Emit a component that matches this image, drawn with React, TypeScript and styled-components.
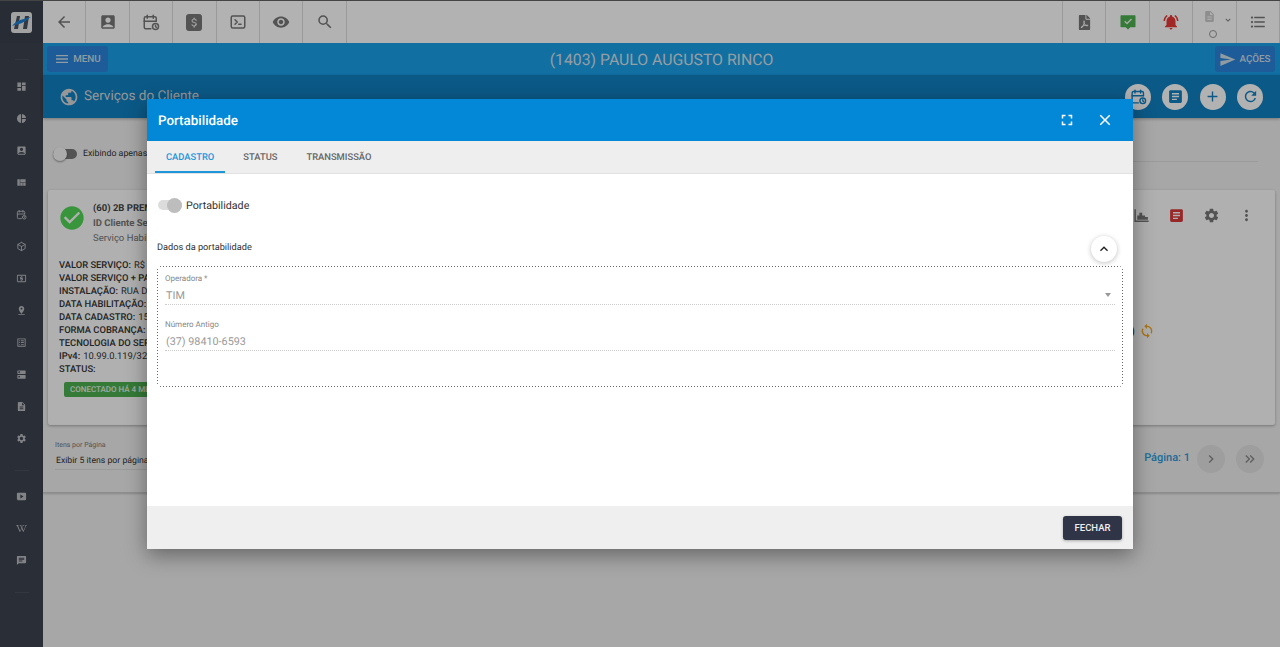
import styled, { createGlobalStyle } from "styled-components"
import {
  MdAccountBox, MdArrowBack, MdArticle, MdAttachMoney, MdChat, MdCheckCircle, MdChevronRight, MdClose,
  MdDashboard, MdDescription, MdDns, MdExpandLess, MdFullscreen, MdFormatListBulleted, MdKeyboardArrowDown,
  MdKeyboardDoubleArrowRight, MdListAlt, MdLocalAtm, MdMenu, MdMoreVert, MdNotificationsActive,
  MdAdd, MdPinDrop, MdPieChart, MdPublic, MdRefresh, MdSearch, MdSend, MdSettings, MdSmartDisplay,
  MdSync, MdViewQuilt, MdVisibility,
} from "react-icons/md"
import { FaFilePdf, FaWikipediaW } from "react-icons/fa"
import { TbBox, TbCalendarTime, TbTerminal2 } from "react-icons/tb"

const GlobalStyle = createGlobalStyle`
  html, body { margin: 0; padding: 0; height: 100%; overflow: hidden; }
  body { font-family: Roboto, "Liberation Sans", sans-serif; color: #333; text-rendering: geometricPrecision; }
  * { box-sizing: border-box; }
`

const Shell = styled.div`
  position: relative;
  display: flex;
  width: 1280px;
  height: 647px;
  overflow: hidden;
  background: #f0f0f0;
  border-top: 1px solid #444;
`

const Sidebar = styled.nav`
  width: 43px;
  flex-shrink: 0;
  display: flex;
  flex-direction: column;
  align-items: center;
  background: #3d424e;
  color: #b9bcc2;
`

const LogoCell = styled.div`
  width: 100%;
  height: 42px;
  display: flex;
  align-items: center;
  justify-content: center;
  background: #3a3f4b;
`

const LogoBox = styled.div`
  width: 21px;
  height: 21px;
  border-radius: 3px;
  background: #e8e8e8;
  overflow: hidden;
`

const SideRule = styled.div<{ $after: number }>`
  width: 14px;
  height: 1px;
  margin-top: 16px;
  margin-bottom: ${(p) => p.$after}px;
  background: #4b505c;
`

const SideItem = styled.div`
  width: 100%;
  height: 32px;
  display: flex;
  align-items: center;
  justify-content: center;
  font-size: 11px;
`

const Main = styled.main`
  flex: 1;
  min-width: 0;
  display: flex;
  flex-direction: column;
`

const Toolbar = styled.header`
  height: 42px;
  display: flex;
  background: #fff;
`

const ToolCell = styled.div<{ $color?: string; $w?: number }>`
  width: ${(p) => p.$w ?? 43.4}px;
  display: flex;
  align-items: center;
  justify-content: center;
  border-right: 1px solid #ddd;
  color: ${(p) => p.$color ?? "#777"};
  font-size: 18px;
`

const ToolSpacer = styled.div`
  flex: 1;
  border-right: 1px solid #ddd;
`

const DollarBadge = styled.span`
  width: 16px;
  height: 17px;
  display: flex;
  align-items: center;
  justify-content: center;
  border-radius: 3px;
  background: #777;
  color: #ddd;
  font-size: 13px;
`

const BrokenStack = styled.div`
  display: flex;
  flex-direction: column;
  align-items: center;
  gap: 7px;
  margin-top: 4px;
  color: #ccc;
  font-size: 13px;
`

const BrokenDot = styled.span`
  width: 8px;
  height: 8px;
  margin-left: 8px;
  border: 1px solid #999;
  border-radius: 50%;
`

const BrokenChevron = styled.span`
  display: flex;
  margin: -4px -6px 0 6px;
  font-size: 10px;
`

const TitleBar = styled.div`
  height: 32px;
  display: flex;
  align-items: center;
  justify-content: space-between;
  padding: 0 5px 0 4px;
  background: #1b9fe9;
`

const BarButton = styled.div<{ $w: number }>`
  width: ${(p) => p.$w}px;
  height: 26px;
  display: flex;
  align-items: center;
  justify-content: center;
  gap: 3px;
  border-radius: 3px;
  background: #2a84dc;
  color: #d0dee8;
  font-size: 9.8px;
  font-weight: 500;
`

const ClientName = styled.h1`
  margin: 0;
  color: #d6e2ea;
  font-size: 15.8px;
  font-weight: 400;
`

const SectionBar = styled.div`
  height: 43px;
  display: flex;
  align-items: center;
  padding: 0 17px 0 16px;
  background: #1080c2;
  box-shadow: 0 1px 3px rgba(0, 0, 0, 0.3);
  color: #d8d8d8;
`

const SectionTitle = styled.h2`
  flex: 1;
  margin: 0 0 2px 5px;
  font-size: 13.5px;
  font-weight: 400;
`

const RoundAction = styled.div`
  width: 26px;
  height: 26px;
  display: flex;
  align-items: center;
  justify-content: center;
  margin-left: 11.3px;
  border-radius: 50%;
  background: #fff;
  color: #1080c2;
  font-size: 17px;
`

const Content = styled.section`
  flex: 1;
  display: flex;
  flex-direction: column;
`

const FilterRow = styled.div`
  height: 72px;
  display: flex;
  align-items: center;
  gap: 6px;
  padding: 0 22px 0 10px;
`

const SmallSwitch = styled.div`
  position: relative;
  width: 24px;
  height: 10px;
  border-radius: 5px;
  background: #777;
`

const SmallThumb = styled.span`
  position: absolute;
  left: 0;
  top: -2px;
  width: 14px;
  height: 14px;
  border-radius: 50%;
  background: #f5f5f5;
  box-shadow: 0 1px 2px rgba(0, 0, 0, 0.4);
`

const FilterLabel = styled.span`
  font-size: 8.8px;
`

const FilterInput = styled.div`
  flex: 1;
  height: 1px;
  margin: 15px 0 0 90px;
  background: #ddd;
`

const Card = styled.article`
  height: 235px;
  margin: 0 5px;
  padding: 10px 0 0 10px;
  border-radius: 2px;
  background: #fcfcfc;
  box-shadow: 0 1px 3px rgba(0, 0, 0, 0.3);
`

const CardHead = styled.div`
  height: 52px;
  display: flex;
  align-items: flex-start;
`

const StatusIcon = styled.div`
  display: flex;
  margin-top: 4px;
  color: #52d656;
  font-size: 28px;
`

const CardTitles = styled.div`
  flex: 1;
  display: flex;
  flex-direction: column;
  margin: 1px 0 0 7px;
`

const CardLine = styled.div<{ $bold?: boolean; $muted?: boolean }>`
  height: 15px;
  line-height: 15px;
  font-size: 9.5px;
  font-weight: ${(p) => (p.$bold ? 700 : 400)};
  color: ${(p) => (p.$muted ? "#777" : "#444")};
`

const CardActions = styled.div`
  display: flex;
  align-items: center;
  height: 30px;
  padding-right: 11px;
`

const CardAction = styled.div<{ $color?: string }>`
  width: 35px;
  display: flex;
  justify-content: center;
  color: ${(p) => p.$color ?? "#777"};
  font-size: 17px;
`

const Details = styled.dl`
  margin: 7px 0 0 1px;
`

const DetailRow = styled.div`
  height: 13px;
  display: flex;
  align-items: center;
  font-size: 9.4px;
  color: #333;
`

const DetailKey = styled.dt`
  margin-right: 3px;
  font-weight: 500;
`

const DetailValue = styled.dd`
  margin: 0;
`

const SyncBlock = styled.span`
  display: flex;
  align-items: center;
  gap: 4px;
  margin: 0 120px 0 auto;
  font-size: 12px;
`

const SyncIcon = styled.span`
  display: flex;
  color: #f5a623;
  font-size: 16px;
`

const StatusBadge = styled.div`
  width: fit-content;
  height: 15px;
  display: flex;
  align-items: center;
  margin: 6px 0 0 6px;
  padding: 0 6px;
  border-radius: 2px;
  background: #4caf50;
  color: #e8f3e8;
  font-size: 8px;
  font-weight: 500;
`

const Pager = styled.div`
  height: 68px;
  display: flex;
  justify-content: space-between;
  padding: 0 16px 0 12px;
  border-bottom: 1px solid #ccc;
  box-shadow: 0 1px 2px rgba(0, 0, 0, 0.2);
`

const PageSize = styled.div`
  display: flex;
  flex-direction: column;
  align-self: flex-start;
  width: 160px;
  margin-top: 16px;
  padding-bottom: 3px;
  border-bottom: 1px solid #ddd;
`

const PageSizeLabel = styled.span`
  margin-bottom: 7px;
  color: #777;
  font-size: 7px;
`

const PageSizeValue = styled.span`
  margin-left: 1px;
  font-size: 8.7px;
`

const PageNav = styled.div`
  display: flex;
  align-items: center;
`

const PageLabel = styled.span`
  margin: 0 7px 3px 0;
  color: #2a9ad8;
  font-size: 11px;
  font-weight: 500;
`

const PageButton = styled.div`
  width: 28px;
  height: 28px;
  display: flex;
  align-items: center;
  justify-content: center;
  border-radius: 50%;
  background: #e2e2e2;
  color: #888;
  font-size: 16px;

  & + & {
    margin-left: 11px;
  }
`

const Backdrop = styled.div`
  position: absolute;
  inset: 0;
  background: rgba(0, 0, 0, 0.3);
`

const Modal = styled.div`
  position: absolute;
  left: 147px;
  top: 98px;
  width: 986px;
  height: 450px;
  display: flex;
  flex-direction: column;
  background: #fff;
  box-shadow: 0 6px 20px rgba(0, 0, 0, 0.4);
`

const ModalHead = styled.div`
  height: 42px;
  display: flex;
  align-items: center;
  padding: 0 19px 0 11px;
  background: #0288d6;
  color: #fff;
`

const ModalTitle = styled.h3`
  flex: 1;
  margin: 0;
  padding-top: 2px;
  font-size: 13.4px;
  font-weight: 500;
`

const HeadIcon = styled.span`
  display: flex;
  margin-left: 20px;
  font-size: 18px;
`

const Tabs = styled.div`
  height: 33px;
  display: flex;
  padding-left: 8px;
  background: #eee;
  border-bottom: 1px solid #e2e2e2;
`

const Tab = styled.div<{ $active?: boolean }>`
  height: 32px;
  display: flex;
  align-items: center;
  margin-right: 7px;
  padding: 3px 11px 0;
  color: ${(p) => (p.$active ? "#1e96dc" : "#666")};
  border-bottom: 2px solid ${(p) => (p.$active ? "#1e96dc" : "transparent")};
  font-size: 9.4px;
  font-weight: 500;
`

const ModalBody = styled.div`
  flex: 1;
  padding: 0 10px;
`

const ToggleRow = styled.div`
  height: 62px;
  display: flex;
  align-items: center;
  gap: 4px;
`

const BigSwitch = styled.div`
  position: relative;
  width: 24px;
  height: 10px;
  margin-left: 1px;
  border-radius: 5px;
  background: #dcdcdc;
`

const BigThumb = styled.span`
  position: absolute;
  right: 0;
  top: -2.5px;
  width: 15px;
  height: 15px;
  border-radius: 50%;
  background: #bdbdbd;
`

const ToggleLabel = styled.span`
  padding-top: 1px;
  font-size: 10.7px;
  color: #333;
`

const GroupHead = styled.div`
  height: 20px;
  display: flex;
  align-items: center;
  justify-content: space-between;
  padding-right: 6px;
  font-size: 9.2px;
  color: #333;
`

const GroupTitle = styled.span`
  padding-top: 2px;
`

const CollapseButton = styled.div`
  flex-shrink: 0;
  width: 26px;
  height: 26px;
  display: flex;
  align-items: center;
  justify-content: center;
  margin-top: 6px;
  border-radius: 50%;
  background: #fff;
  box-shadow: 0 1px 5px rgba(0, 0, 0, 0.25);
  color: #222;
  font-size: 16px;
`

const FieldGroup = styled.fieldset`
  height: 121px;
  margin: 10px 0 0;
  padding: 8px 8px 0 8px;
  border: 0;
  border-radius: 4px;
  background-image:
    repeating-linear-gradient(90deg, #666 0 1px, transparent 1px 3px),
    repeating-linear-gradient(90deg, #666 0 1px, transparent 1px 3px),
    repeating-linear-gradient(0deg, #666 0 1px, transparent 1px 3px),
    repeating-linear-gradient(0deg, #666 0 1px, transparent 1px 3px);
  background-size: 100% 1px, 100% 1px, 1px 100%, 1px 100%;
  background-position: top, bottom, left, right;
  background-repeat: no-repeat;
`

const Field = styled.div`
  position: relative;
  height: 31px;
  margin-bottom: 15px;
  border-bottom: 1px dotted #ccc;
`

const FieldLabel = styled.label`
  display: block;
  height: 11px;
  color: #888;
  font-size: 8px;
`

const FieldValue = styled.div`
  height: 19px;
  line-height: 22px;
  padding-left: 1px;
  color: #999;
  font-size: 10.8px;
`

const FieldCaret = styled.span`
  position: absolute;
  right: 4px;
  top: 19px;
  width: 0;
  height: 0;
  border-left: 3.5px solid transparent;
  border-right: 3.5px solid transparent;
  border-top: 4px solid #999;
`

const ModalFoot = styled.div`
  height: 43px;
  display: flex;
  align-items: center;
  justify-content: flex-end;
  padding-right: 11px;
  background: #efefef;
`

const CloseButton = styled.button`
  width: 59px;
  height: 24px;
  border: 0;
  border-radius: 3px;
  background: #2f3447;
  box-shadow: 0 1px 3px rgba(0, 0, 0, 0.3);
  color: #eee;
  font-family: inherit;
  font-size: 9.5px;
  font-weight: 500;
`

const sideTop = [MdDashboard, MdPieChart, MdAccountBox, MdViewQuilt, TbCalendarTime, TbBox, MdLocalAtm, MdPinDrop, MdListAlt, MdDns, MdDescription, MdSettings]
const sideBottom = [MdSmartDisplay, FaWikipediaW, MdChat]

const details: [string, string][] = [
  ["VALOR SERVIÇO:", "R$ 0,00"],
  ["VALOR SERVIÇO + PACOTES:", "R$ 0,00"],
  ["INSTALAÇÃO:", "RUA DO"],
  ["DATA HABILITAÇÃO:", "15"],
  ["DATA CADASTRO:", "15"],
  ["FORMA COBRANÇA:", "BOLETO"],
  ["TECNOLOGIA DO SERVIÇO:", "FIBRA"],
  ["IPv4:", "10.99.0.119/32"],
  ["STATUS:", ""],
]

function Logo() {
  return (
    <LogoBox>
      <svg width="21" height="21" viewBox="0 0 21 21">
        <path d="M6 4h3l-2 13H3z" fill="#4a5260" />
        <path d="M14 4h4l-2 13h-4z" fill="#4a5260" />
        <path d="M1 14C6 8 12 7 20 5c-4 3-8 6-12 7-3 1-5 1-7 2z" fill="#1d7fd1" />
      </svg>
    </LogoBox>
  )
}

function ChatCheck() {
  return (
    <svg width="18" height="18" viewBox="0 0 24 24">
      <path d="M3 3h18a1 1 0 0 1 1 1v14a1 1 0 0 1-1 1h-6l-3 3-3-3H3a1 1 0 0 1-1-1V4a1 1 0 0 1 1-1z" fill="#4caf50" />
      <path d="M7.5 11l3.2 3 6-6" fill="none" stroke="#e8f5e8" strokeWidth="2" />
    </svg>
  )
}

function StepChart() {
  return (
    <svg width="17" height="17" viewBox="0 0 24 24" fill="currentColor">
      <path d="M2 3h2v16h18v2H2z" />
      <path d="M6 18v-6h3V8h4v4h4v2h4v4z" />
    </svg>
  )
}

export default function App() {
  return (
    <Shell>
      <GlobalStyle />
      <Sidebar>
        <LogoCell><Logo /></LogoCell>
        <SideRule $after={10} />
        {sideTop.map((Icon, i) => (
          <SideItem key={i}><Icon /></SideItem>
        ))}
        <SideRule $after={9} />
        {sideBottom.map((Icon, i) => (
          <SideItem key={i}><Icon /></SideItem>
        ))}
        <SideRule $after={0} />
      </Sidebar>

      <Main>
        <Toolbar>
          <ToolCell><MdArrowBack /></ToolCell>
          <ToolCell><MdAccountBox /></ToolCell>
          <ToolCell><TbCalendarTime /></ToolCell>
          <ToolCell><DollarBadge><MdAttachMoney /></DollarBadge></ToolCell>
          <ToolCell><TbTerminal2 /></ToolCell>
          <ToolCell><MdVisibility /></ToolCell>
          <ToolCell><MdSearch /></ToolCell>
          <ToolSpacer />
          <ToolCell><FaFilePdf size={15} /></ToolCell>
          <ToolCell><ChatCheck /></ToolCell>
          <ToolCell $color="#e53935"><MdNotificationsActive /></ToolCell>
          <ToolCell>
            <BrokenStack>
              <MdDescription />
              <BrokenDot />
            </BrokenStack>
            <BrokenChevron><MdKeyboardArrowDown /></BrokenChevron>
          </ToolCell>
          <ToolCell><MdFormatListBulleted /></ToolCell>
        </Toolbar>

        <TitleBar>
          <BarButton $w={61}><MdMenu size={16} />MENU</BarButton>
          <ClientName>(1403) PAULO AUGUSTO RINCO</ClientName>
          <BarButton $w={60}><MdSend size={17} />AÇÕES</BarButton>
        </TitleBar>

        <SectionBar>
          <MdPublic size={20} />
          <SectionTitle>Serviços do Cliente</SectionTitle>
          <RoundAction><TbCalendarTime /></RoundAction>
          <RoundAction><MdArticle /></RoundAction>
          <RoundAction><MdAdd /></RoundAction>
          <RoundAction><MdRefresh /></RoundAction>
        </SectionBar>

        <Content>
          <FilterRow>
            <SmallSwitch><SmallThumb /></SmallSwitch>
            <FilterLabel>Exibindo apenas</FilterLabel>
            <FilterInput />
          </FilterRow>

          <Card>
            <CardHead>
              <StatusIcon><MdCheckCircle /></StatusIcon>
              <CardTitles>
                <CardLine $bold>(60) 2B PREMIUM</CardLine>
                <CardLine $bold $muted>ID Cliente Serviço</CardLine>
                <CardLine $muted>Serviço Habilitado</CardLine>
              </CardTitles>
              <CardActions>
                <CardAction><StepChart /></CardAction>
                <CardAction $color="#d93a3a"><MdArticle /></CardAction>
                <CardAction><MdSettings /></CardAction>
                <CardAction><MdMoreVert /></CardAction>
              </CardActions>
            </CardHead>

            <Details>
              {details.map(([key, value]) => (
                <DetailRow key={key}>
                  <DetailKey>{key}</DetailKey>
                  <DetailValue>{value}</DetailValue>
                  {key === "FORMA COBRANÇA:" && (
                    <SyncBlock>)<SyncIcon><MdSync /></SyncIcon></SyncBlock>
                  )}
                </DetailRow>
              ))}
            </Details>
            <StatusBadge>CONECTADO HÁ 4 MESES</StatusBadge>
          </Card>

          <Pager>
            <PageSize>
              <PageSizeLabel>Itens por Página</PageSizeLabel>
              <PageSizeValue>Exibir 5 itens por página</PageSizeValue>
            </PageSize>
            <PageNav>
              <PageLabel>Página: 1</PageLabel>
              <PageButton><MdChevronRight /></PageButton>
              <PageButton><MdKeyboardDoubleArrowRight /></PageButton>
            </PageNav>
          </Pager>
        </Content>
      </Main>

      <Backdrop />

      <Modal>
        <ModalHead>
          <ModalTitle>Portabilidade</ModalTitle>
          <HeadIcon><MdFullscreen /></HeadIcon>
          <HeadIcon><MdClose /></HeadIcon>
        </ModalHead>
        <Tabs>
          <Tab $active>CADASTRO</Tab>
          <Tab>STATUS</Tab>
          <Tab>TRANSMISSÃO</Tab>
        </Tabs>
        <ModalBody>
          <ToggleRow>
            <BigSwitch><BigThumb /></BigSwitch>
            <ToggleLabel>Portabilidade</ToggleLabel>
          </ToggleRow>
          <GroupHead>
            <GroupTitle>Dados da portabilidade</GroupTitle>
            <CollapseButton><MdExpandLess /></CollapseButton>
          </GroupHead>
          <FieldGroup>
            <Field>
              <FieldLabel>Operadora *</FieldLabel>
              <FieldValue>TIM</FieldValue>
              <FieldCaret />
            </Field>
            <Field>
              <FieldLabel>Número Antigo</FieldLabel>
              <FieldValue>(37) 98410-6593</FieldValue>
            </Field>
          </FieldGroup>
        </ModalBody>
        <ModalFoot>
          <CloseButton>FECHAR</CloseButton>
        </ModalFoot>
      </Modal>
    </Shell>
  )
}
